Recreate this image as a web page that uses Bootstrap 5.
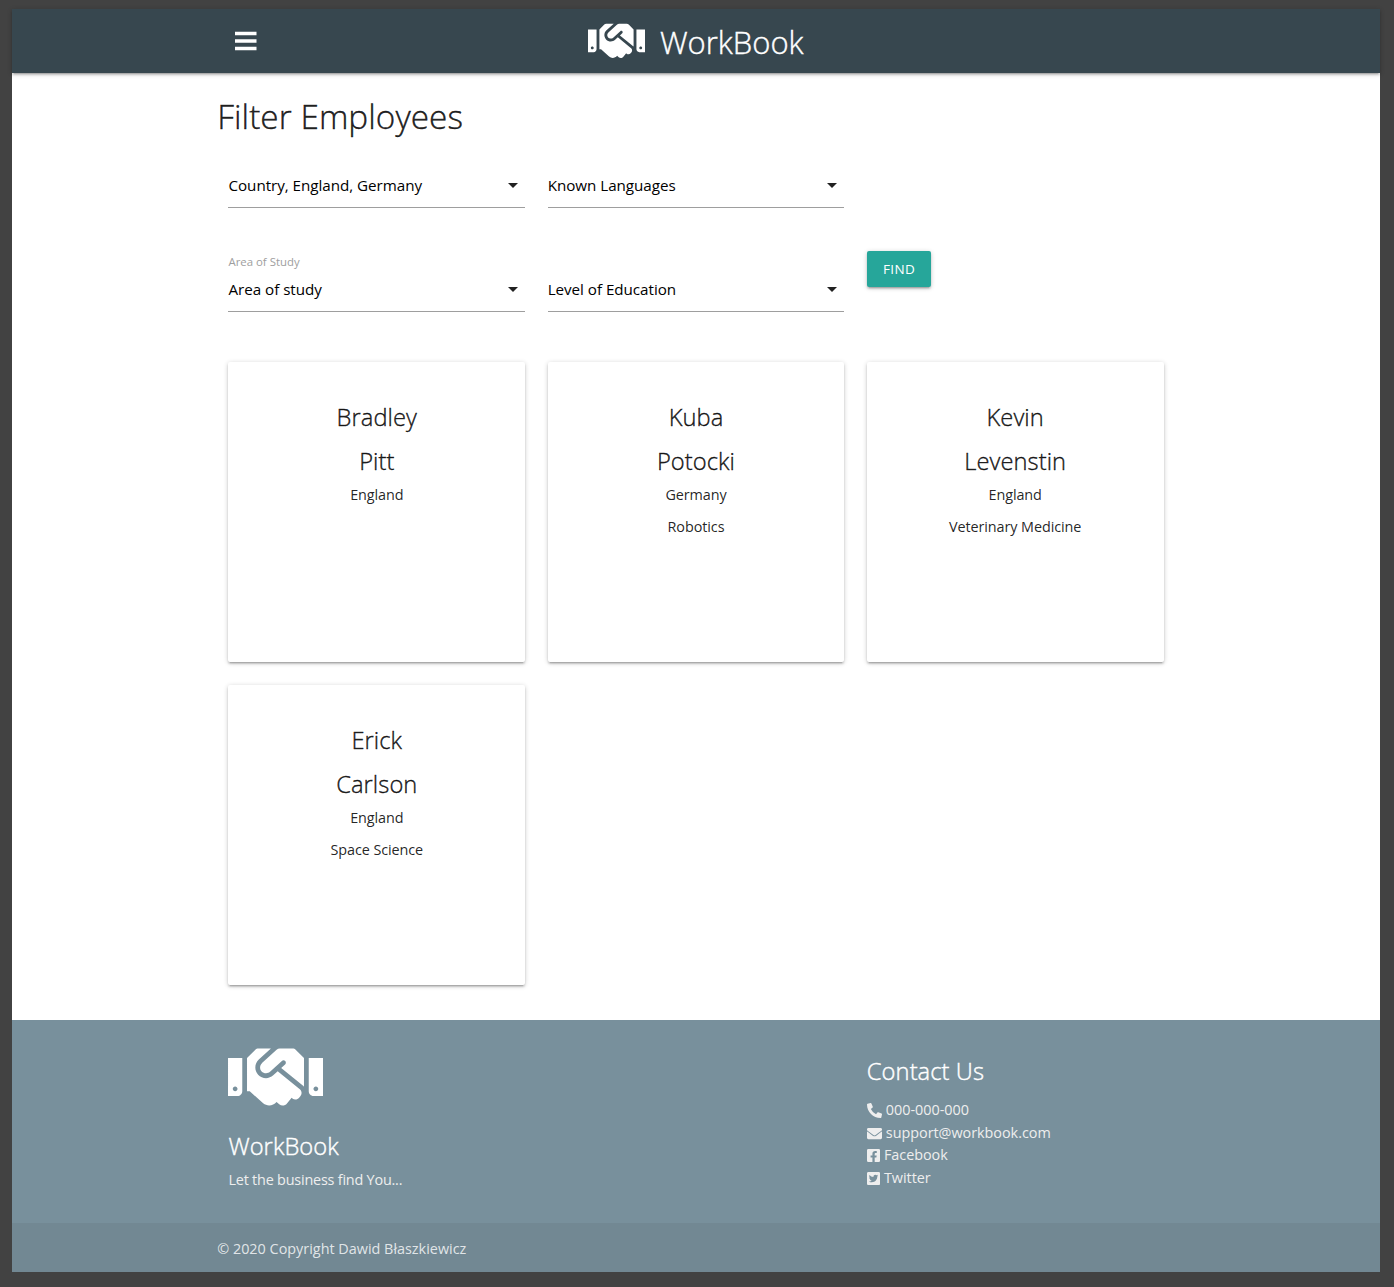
<!DOCTYPE html>
<html lang="en">
<head>
<meta charset="utf-8">
<meta name="viewport" content="width=device-width, initial-scale=1">
<title>WorkBook</title>
<link href="https://cdn.jsdelivr.net/npm/bootstrap@5.3.0/dist/css/bootstrap.min.css" rel="stylesheet">
<style>
  body { background: #424242; padding: 9px 14px 15px 12px; font: 14.4px/22.5px "Open Sans", "Noto Sans", sans-serif; color: rgba(0,0,0,.87); }
  .page { height: 1263px; background: #fff; }
  .wrap { width: 957.6px; margin: 0 auto; }
  .row { --bs-gutter-x: 22.5px; margin-left: 0; margin-right: 0; }
  .topbar { height: 64px; background: #37474f; color: #fff; box-shadow: 0 2px 2px 0 rgba(0,0,0,.14), 0 3px 1px -2px rgba(0,0,0,.12), 0 1px 5px 0 rgba(0,0,0,.2); position: relative; }
  .topbar .wrap { display: grid; grid-template-columns: 1fr auto 1fr; padding-bottom: 5px; }
  .menu-btn { margin-left: 18px; padding: 0; border: 0; background: none; color: inherit; justify-self: start; display: flex; }
  .brand { color: #fff; text-decoration: none; font-size: 31px; gap: 14.5px; font-weight: 300; }
  .brand span { letter-spacing: 0; line-height: 59px; padding-top: 4px; }
  h1, h2, .brand span { -webkit-text-stroke: .4px currentColor; }
  svg { fill: currentColor; flex: none; }
  .shake { width: 1.267em; height: 1.013em; display: block; }
  h1 { font-size: 33.3px; line-height: 37.6px; font-weight: 300; margin: 0; padding-top: 25px; letter-spacing: .06px; }
  h2 { font-size: 23.7px; line-height: 27.06px; font-weight: 300; margin: 0; letter-spacing: .07px; }
  .filters { padding-top: 27px; }
  .filters + .filters { padding-top: 59px; }
  .picker { height: 45px; border-bottom: 1px solid #9e9e9e; color: #000; font-size: 15.2px; line-height: 44px; position: relative; }
  .picker span { letter-spacing: -.03px; }
  .picker svg { color: rgba(0,0,0,.87); }
  .picker label { position: absolute; left: 0; top: -15px; font-size: 11.4px; line-height: 20px; color: #9e9e9e; }
  .find { margin-top: -16px; width: 64.6px; height: 36px; border: 0; border-radius: 2px; padding: 0; background: #26a69a; color: #fff; font-size: 13.5px; line-height: 36px; letter-spacing: .4px; }
  .find, .person { box-shadow: 0 2px 2px 0 rgba(0,0,0,.14), 0 3px 1px -2px rgba(0,0,0,.12), 0 1px 5px 0 rgba(0,0,0,.2); }
  .people { padding-top: 50px; row-gap: 23px; }
  .person { height: 300px; background: #fff; border-radius: 2px; padding-top: 42.4px; text-align: center; }
  .person h2 { margin-bottom: 16.5px; }
  .person h2 + h2 { margin-bottom: 9.2px; }
  .person p { margin: 0 0 10.2px; letter-spacing: -.08px; }
  .foot { height: 252px; margin-top: 35px; background: #78909c; color: #eee; }
  .foot-main { height: 203px; }
  .foot h2 { color: #fff; }
  .foot .shake { font-size: 75px; margin: 19.5px 0 18px; color: #fff; }
  .tagline { margin: 9px 0 0; letter-spacing: -.2px; }
  .copy { height: 49px; background: rgba(51,51,51,.08); line-height: 51px; color: rgba(255,255,255,.8); }
  .contact { padding-top: 38px; }
  .contact ul { margin-top: 14.6px; }
  .contact li { height: 22.5px; display: flex; align-items: center; gap: 4px; letter-spacing: -.03px; }
</style>
<script src="https://cdn.jsdelivr.net/npm/bootstrap@5.3.0/dist/js/bootstrap.bundle.min.js"></script>
</head>
<body>
<svg class="d-none"><symbol id="handshake" viewBox="0 0 640 512"><path d="M434.7 64h-85.9c-8 0-15.7 3-21.6 8.4l-98.3 90c-.1.1-.2.3-.3.4-16.6 15.6-16.3 40.5-2.1 56 12.7 13.9 39.4 17.6 56.1 2.7.1-.1.3-.1.4-.2l79.9-73.2c6.5-5.9 16.7-5.5 22.6 1 6 6.5 5.5 16.6-1 22.6l-26.1 23.9L504 313.8c2.9 2.4 5.5 5 7.9 7.7V128l-54.6-54.6c-5.9-6-14.1-9.4-22.6-9.4zM544 128.2v223.9c0 17.7 14.3 32 32 32h64V128.2h-96zm48 223.9c-8.8 0-16-7.2-16-16s7.2-16 16-16 16 7.2 16 16-7.2 16-16 16zM0 384h64c17.7 0 32-14.3 32-32V128.2H0V384zm48-63.9c8.8 0 16 7.2 16 16s-7.2 16-16 16-16-7.2-16-16c0-8.9 7.2-16 16-16zm435.9 18.6L334.6 217.5l-30 27.5c-29.7 27.1-75.2 24.5-101.7-4.4-26.9-29.4-24.8-74.9 4.4-101.7L289.1 64h-83.8c-8.5 0-16.6 3.4-22.6 9.4L128 128v223.9h18.3l90.5 81.9c27.4 22.3 67.7 18.1 90-9.3l.2-.2 17.9 15.5c15.9 13 39.4 10.5 52.3-5.4l31.4-38.6 5.4 4.4c13.7 11.1 33.9 9.1 45-4.7l9.5-11.7c11.2-13.8 9.1-33.9-4.6-45.1z"/></symbol>
<symbol id="caret" viewBox="0 0 24 24"><path d="M7 10l5 5 5-5z"/></symbol></svg>
<div class="page">
  <header class="topbar">
    <div class="wrap h-100 align-items-center">
      <button class="menu-btn" type="button" aria-label="Menu"><svg width="22" height="20" viewBox="0 0 22 20"><path d="M0 .7h21.5v3.6H0zM0 8.2h21.5v3.6H0zM0 15.7h21.5v3.6H0z"/></svg></button>
      <a class="brand d-flex align-items-center" href="#"><svg class="shake" style="font-size:45px"><use href="#handshake"/></svg><span>WorkBook</span></a>
    </div>
  </header>
  <main class="wrap">
    <h1>Filter Employees</h1>
    <div class="row filters">
      <div class="col-4"><div class="picker d-flex align-items-center justify-content-between"><span>Country, England, Germany</span><svg width="24" height="24"><use href="#caret"/></svg></div></div>
      <div class="col-4"><div class="picker d-flex align-items-center justify-content-between"><span>Known Languages</span><svg width="24" height="24"><use href="#caret"/></svg></div></div>
    </div>
    <div class="row filters">
      <div class="col-4"><div class="picker d-flex align-items-center justify-content-between"><label>Area of Study</label><span>Area of study</span><svg width="24" height="24"><use href="#caret"/></svg></div></div>
      <div class="col-4"><div class="picker d-flex align-items-center justify-content-between"><span>Level of Education</span><svg width="24" height="24"><use href="#caret"/></svg></div></div>
      <div class="col-4"><button class="find d-block" type="button">FIND</button></div>
    </div>
    <div class="row people">
      <div class="col-4"><div class="person"><h2>Bradley</h2><h2>Pitt</h2><p>England</p></div></div>
      <div class="col-4"><div class="person"><h2>Kuba</h2><h2>Potocki</h2><p>Germany</p><p>Robotics</p></div></div>
      <div class="col-4"><div class="person"><h2>Kevin</h2><h2>Levenstin</h2><p>England</p><p>Veterinary Medicine</p></div></div>
      <div class="col-4"><div class="person"><h2>Erick</h2><h2>Carlson</h2><p>England</p><p>Space Science</p></div></div>
    </div>
  </main>
  <footer class="foot">
    <div class="foot-main"><div class="wrap"><div class="row">
      <div class="col-8"><svg class="shake"><use href="#handshake"/></svg><h2>WorkBook</h2><p class="tagline">Let the business find You...</p></div>
      <div class="col-4 contact"><h2>Contact Us</h2>
        <ul class="list-unstyled mb-0">
          <li><svg width="15" height="15" viewBox="0 0 512 512"><path d="M497.39 361.8l-112-48a24 24 0 0 0-28 6.9l-49.6 60.6A370.66 370.66 0 0 1 130.6 204.11l60.6-49.6a23.94 23.94 0 0 0 6.9-28l-48-112A24.16 24.16 0 0 0 122.6.61l-104 24A24 24 0 0 0 0 48c0 256.5 207.9 464 464 464a24 24 0 0 0 23.4-18.6l24-104a24.29 24.29 0 0 0-14.01-27.6z"/></svg><span>000-000-000</span></li>
          <li><svg width="15" height="15" viewBox="0 0 512 512"><path d="M502.3 190.8c3.9-3.1 9.7-.2 9.7 4.7V400c0 26.5-21.5 48-48 48H48c-26.5 0-48-21.5-48-48V195.6c0-5 5.7-7.8 9.7-4.7 22.4 17.4 52.1 39.5 154.1 113.6 21.1 15.4 56.7 47.8 92.2 47.6 35.7.3 72-32.8 92.3-47.6 102-74.1 131.6-96.3 154-113.7zM256 320c23.2.4 56.6-29.2 73.4-41.4 132.7-96.3 142.8-104.7 173.4-128.7 5.8-4.5 9.2-11.5 9.2-18.9v-19c0-26.5-21.5-48-48-48H48c-26.5 0-48 21.5-48 48v19c0 7.4 3.4 14.3 9.2 18.9 30.6 23.9 40.7 32.4 173.4 128.7 16.8 12.2 50.2 41.8 73.4 41.4z"/></svg><span>support@workbook.com</span></li>
          <li><svg width="13.1" height="15" viewBox="0 0 448 512"><path d="M400 32H48A48 48 0 0 0 0 80v352a48 48 0 0 0 48 48h137.25V327.69h-63V256h63v-54.64c0-62.15 37-96.48 93.67-96.48 27.14 0 55.52 4.84 55.52 4.84v61h-31.27c-30.81 0-40.42 19.12-40.42 38.73V256h68.78l-11 71.69h-57.78V480H400a48 48 0 0 0 48-48V80a48 48 0 0 0-48-48z"/></svg><span>Facebook</span></li>
          <li><svg width="13.1" height="15" viewBox="0 0 448 512"><path d="M400 32H48C21.5 32 0 53.5 0 80v352c0 26.5 21.5 48 48 48h352c26.5 0 48-21.5 48-48V80c0-26.5-21.5-48-48-48zm-48.9 158.8c.2 2.8.2 5.7.2 8.5 0 86.7-66 186.6-186.6 186.6-37.2 0-71.7-10.8-100.7-29.4 5.3.6 10.4.8 15.8.8 30.7 0 58.9-10.4 81.4-28-28.8-.6-53-19.5-61.3-45.5 10.1 1.5 19.2 1.5 29.6-1.2-30-6.1-52.5-32.5-52.5-64.4v-.8c8.7 4.9 18.9 7.9 29.6 8.3a65.447 65.447 0 0 1-29.2-54.6c0-12.2 3.2-23.4 8.9-33.1 32.3 39.8 80.8 65.8 135.2 68.6-9.3-44.5 24-80.6 64-80.6 18.9 0 35.9 7.9 47.9 20.7 14.8-2.8 29-8.3 41.6-15.8-4.9 15.2-15.2 28-28.8 36.1 13.2-1.4 26-5.1 37.8-10.2-8.9 13.1-20.1 24.7-32.9 34z"/></svg><span>Twitter</span></li>
        </ul></div>
    </div></div></div>
    <div class="copy"><div class="wrap">© 2020 Copyright Dawid Błaszkiewicz</div></div>
  </footer>
</div>
</body>
</html>
